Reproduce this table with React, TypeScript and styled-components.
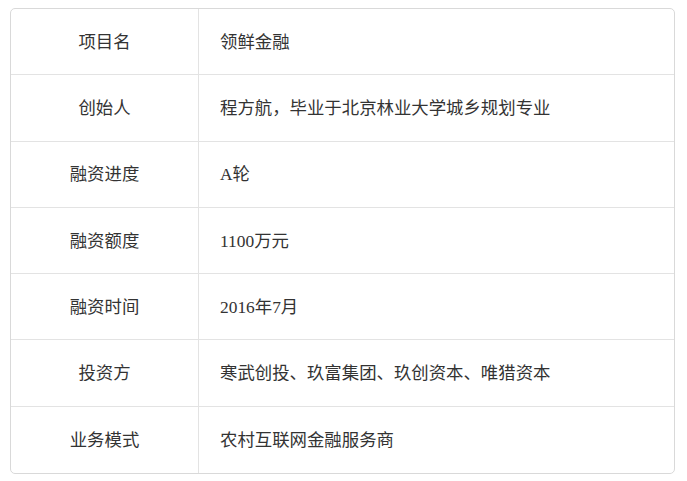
import React from "react";
import styled, { createGlobalStyle } from "styled-components";

const Global = createGlobalStyle`
  html, body { margin: 0; padding: 0; background: #fff; }
  body { font-family: "Liberation Serif", "Noto Sans CJK SC", sans-serif; }
`;

const Page = styled.div`
  padding: 8px 12px 0 10px;
  width: 687px;
  box-sizing: border-box;
`;

const Table = styled.div`
  display: grid;
  grid-template-columns: 188px 1fr;
  border: 1px solid #d9d9d9;
  border-radius: 5px;
  overflow: hidden;
  width: 665px;
  box-sizing: border-box;
`;

const Cell = styled.div<{ $label?: boolean; $last?: boolean }>`
  height: 66.3px;
  box-sizing: border-box;
  display: flex;
  align-items: center;
  justify-content: ${(p) => (p.$label ? "center" : "flex-start")};
  padding-left: ${(p) => (p.$label ? "0" : "21px")};
  padding-bottom: 3px;
  border-bottom: ${(p) => (p.$last ? "none" : "1px solid #e3e3e3")};
  border-right: ${(p) => (p.$label ? "1px solid #e3e3e3" : "none")};
  font-size: 17.4px;
  color: #333;
  white-space: nowrap;
`;

const rows: [string, string][] = [
  ["项目名", "领鲜金融"],
  ["创始人", "程方航，毕业于北京林业大学城乡规划专业"],
  ["融资进度", "A轮"],
  ["融资额度", "1100万元"],
  ["融资时间", "2016年7月"],
  ["投资方", "寒武创投、玖富集团、玖创资本、唯猎资本"],
  ["业务模式", "农村互联网金融服务商"],
];

export default function App() {
  return (
    <Page>
      <Global />
      <Table>
        {rows.map(([k, v], i) => (
          <React.Fragment key={k}>
            <Cell $label $last={i === rows.length - 1}>{k}</Cell>
            <Cell $last={i === rows.length - 1}>{v}</Cell>
          </React.Fragment>
        ))}
      </Table>
    </Page>
  );
}
